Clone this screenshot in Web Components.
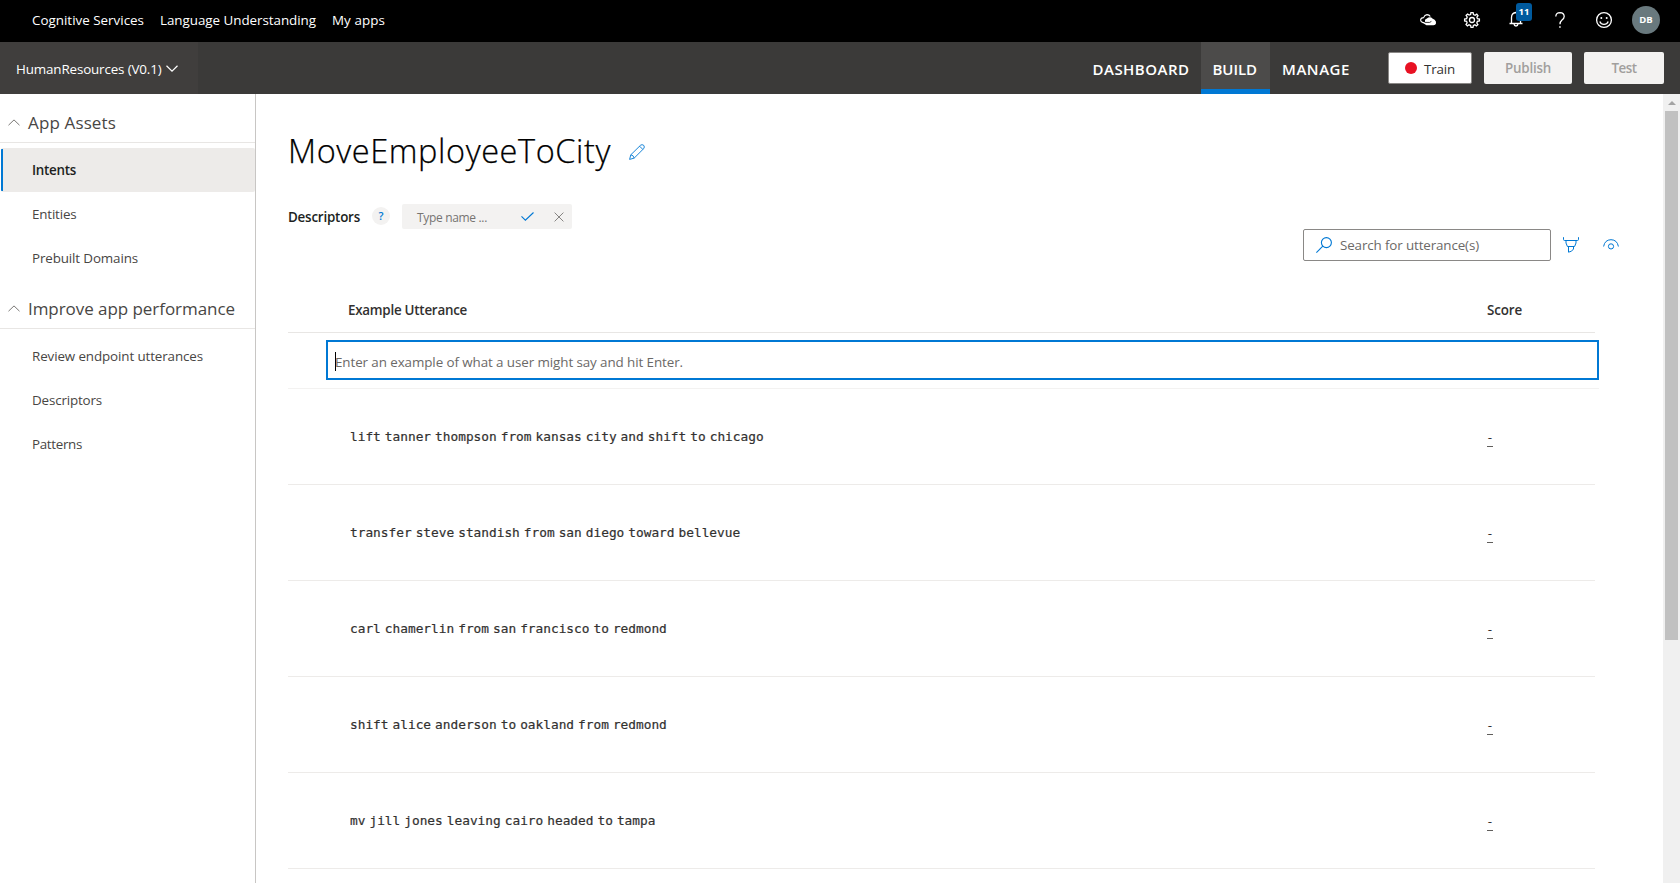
<!DOCTYPE html>
<html lang="en">
<head>
<meta charset="utf-8">
<title>Language Understanding</title>
<style>
html,body{margin:0;height:100%;overflow:hidden;background:#fff}
body{font-family:"Open Sans","Noto Sans",sans-serif;font-size:13.4px;color:#323130}
</style>
</head>
<body>
<luis-app></luis-app>
<script>
const component = (name, css, html, setup) => {
  const tpl = document.createElement('template');
  tpl.innerHTML = `<style>*{box-sizing:border-box}${css}</style>${html}`;
  customElements.define(name, class extends HTMLElement {
    constructor() {
      super();
      this.attachShadow({mode: 'open'}).append(tpl.content.cloneNode(true));
    }
    connectedCallback() { if (setup) setup(this, this.shadowRoot); }
  });
};

const icons = {
  cloud: [16, 12, '<path fill="currentColor" stroke="none" d="M5 5.8 8.4 3.6Q10.8 2.4 12.4 4.6L14.6 5.8Q16.5 7.4 16 9.4 15.5 11.2 13.5 11.2H6.4L3.4 9.2 5 8Z"/><path d="M5 8.6H3Q.6 8 .6 6 .8 3.8 3.6 3.6 4.6.8 7 .6 9.2.6 10.3 2.6"/><path d="M4.5 8.4H9.6L11.4 7.4" stroke="#000" stroke-width=".8"/>'],
  gear: [16, 16, '<path d="M6.9.6H9.1L9.5 2.6 11.1 3.3 12.8 2.2 14 3.7 12.9 5.2 13.4 6.6 15.4 7V9L13.4 9.4 12.8 11 13.9 12.6 12.4 14 10.9 12.8 9.4 13.4 9 15.4H7L6.6 13.4 5 12.8 3.4 13.9 2 12.4 3.1 10.9 2.6 9.4.6 9V7L2.6 6.6 3.2 5 2.1 3.4 3.6 2 5.1 3.1 6.6 2.6Z"/><circle cx="8" cy="8" r="2.5"/>'],
  bell: [14, 16, '<path d="M2.5 12.4V6.5Q2.5 2 7 1.5 11.5 2 11.5 6.5V12.4M.5 12.5H13.5M5 13Q5.2 15 7 15 8.8 15 9 13"/>'],
  help: [10, 16, '<path d="M.8 4.6Q.8.6 5 .6 9.2.8 9.2 4.5 9.2 6.2 7 8 5 9.6 5 12.2"/><path stroke="none" fill="currentColor" d="M4.2 14.3h1.5v1.5H4.2z"/>'],
  smile: [16, 16, '<circle cx="8" cy="8" r="7.4"/><path d="M3.8 9.4Q5 12.3 8 12.3 11 12.3 12.2 9.4"/><circle cx="5.3" cy="5.9" r="1" fill="currentColor" stroke="none"/><circle cx="10.7" cy="5.9" r="1" fill="currentColor" stroke="none"/>'],
  down: [12, 7, '<path d="M.5.7 6 6.1 11.5.7"/>'],
  up: [12, 7, '<path d="M.5 6.2 6 .9 11.5 6.2"/>'],
  pencil: [16, 16, '<path d="M.6 15.4 1.8 10.8 11.6 1.2Q13 .1 14.7 1.3 15.9 3 14.8 4.5L5.2 14.1Z M1.8 10.8Q4.6 11.2 5.2 14.1M10.6 2.2 13.8 5.4"/>'],
  check: [13, 9, '<path d="M.5 4.3 4.4 8.2 12.5.5"/>'],
  close: [10, 10, '<path d="M.6.6 9.4 9.4M9.4.6.6 9.4"/>'],
  search: [16, 16, '<circle cx="10.4" cy="5.6" r="5"/><path d="M6.8 9.2.4 15.6"/>'],
  marker: [16, 16, '<path d="M.5.2V2.4Q.5 3.5 1.6 3.5H14.4Q15.5 3.5 15.5 2.4V.2M3 3.5V6L4.4 9.5H11.6L13 6V3.5M5.5 9.5V15.2L8.5 14.2 10.5 12V9.5"/>'],
  eye: [16, 11, '<path d="M.6 7.5Q1.8.8 8 .7 14.2.8 15.4 7.5"/><circle cx="8" cy="7.4" r="2.6"/>']
};
component('ui-icon', ':host{display:block;flex:none}svg{display:block;overflow:visible;fill:none;stroke:currentColor}', '<svg></svg>', (host, root) => {
  const [w, h, body] = icons[host.getAttribute('name')];
  const svg = root.querySelector('svg');
  svg.setAttribute('width', w);
  svg.setAttribute('height', h);
  svg.setAttribute('viewBox', `0 0 ${w} ${h}`);
  svg.setAttribute('stroke-width', host.getAttribute('weight') || 1.1);
  svg.innerHTML = body;
});

component('top-bar', `
:host{display:flex;height:42px;background:#000;color:#fff;padding:0 20px 0 32px;align-items:center}
nav{display:flex;gap:16px;line-height:20px;flex:1;padding-bottom:2px}
.tools{display:flex;align-items:center;height:40px;margin-top:-2px}
.bell{position:relative;width:12px;margin:-2px 33px 0 30px}
.bell ui-icon{margin-left:-1px}
b{position:absolute;left:6px;top:-8px;width:16px;height:18px;border-radius:3px;background:#005a9e;font:700 9.5px/18px "Open Sans";text-align:center}
i{width:28px;height:28px;border-radius:50%;background:#69797e;margin-left:20px;font:700 9.5px/28px "Open Sans";text-align:center}`, `
<nav><fit-text w="112">Cognitive Services</fit-text><fit-text w="156">Language Understanding</fit-text><fit-text w="53">My apps</fit-text></nav>
<div class="tools"><ui-icon name="cloud"></ui-icon><ui-icon name="gear" style="margin-left:28px" weight="1.3"></ui-icon>
<div class="bell"><ui-icon name="bell" weight="1.3"></ui-icon><b>11</b></div>
<ui-icon name="help" weight="1.3"></ui-icon><ui-icon name="smile" style="margin-left:31px" weight="1.3"></ui-icon><i>DB</i></div>`);

component('app-button', `
:host{display:flex;height:32px;box-sizing:border-box;align-items:center;justify-content:center;background:#f3f2f1;color:#a19f9d;border-radius:2px;font-weight:600;line-height:20px;flex:none}
:host([primary]){background:#fff;color:#323130;border:1px solid #8a8886;font-weight:400;gap:7px;padding-top:2px}
span{display:none;width:12px;height:12px;border-radius:50%;background:#e81123}
:host([primary]) span{display:block;margin-top:-2px}`, `<span></span><slot></slot>`);

component('app-bar', `
:host{display:flex;height:52px;background:#3b3a39;color:#fff;padding-right:16px}
.app{width:198px;display:flex;background:#403e3d;padding:17px 0 0 16px;line-height:20px;gap:4.5px}
.app ui-icon{margin-top:6px}
nav{flex:1;display:flex;justify-content:flex-end;font-weight:600;font-size:15px;line-height:50px;margin-right:38px}
nav div{padding:2px 13px 0 12px}
.on{background:#4c4b4a;box-shadow:inset 0 -5px #0078d4}
.actions{display:flex;padding-top:10px}`, `
<div class="app"><fit-text w="145.5">HumanResources (V0.1)</fit-text><ui-icon name="down" weight="1.2"></ui-icon></div>
<nav><div style="padding-right:11px"><fit-text w="97">DASHBOARD</fit-text></div><div class="on"><fit-text w="44.5">BUILD</fit-text></div><div style="padding-right:0"><fit-text w="68">MANAGE</fit-text></div></nav>
<div class="actions"><app-button primary style="width:84px"><fit-text w="31">Train</fit-text></app-button><app-button style="width:88px;margin-left:12px"><fit-text w="46">Publish</fit-text></app-button><app-button style="width:80px;margin-left:12px"><fit-text w="25">Test</fit-text></app-button></div>`);

component('nav-group', `
:host{display:block}
header{display:flex;height:49px;border-bottom:1px solid #e8e6e4;margin-bottom:5px;padding:16px 0 0 8px;font-size:17px;line-height:26px;gap:8px;color:#484644}
ui-icon{margin-top:9px;color:#797775}`, `<header><ui-icon name="up" weight="1"></ui-icon><slot name="title"></slot></header><slot></slot>`);

component('nav-item', `
:host{display:block;height:44px;margin-left:1px;padding:0 0 0 31px;line-height:45px;box-sizing:border-box;color:#484644}
:host([active]){background:linear-gradient(#0078d4,#0078d4) 0 1px/2px 42px no-repeat #edebe9;color:#201f1e;font-weight:600;border-radius:2px}`, `<slot></slot>`);

component('side-bar', `
:host{display:block;width:256px;flex:none;border-right:1px solid #c8c6c4;box-sizing:border-box}`, `
<nav-group><fit-text slot="title" w="88">App Assets</fit-text>
<nav-item active><fit-text w="44">Intents</fit-text></nav-item><nav-item><fit-text w="44.5">Entities</fit-text></nav-item><nav-item><fit-text w="106">Prebuilt Domains</fit-text></nav-item></nav-group>
<nav-group><fit-text slot="title" w="207">Improve app performance</fit-text>
<nav-item><fit-text w="171">Review endpoint utterances</fit-text></nav-item><nav-item><fit-text w="70">Descriptors</fit-text></nav-item><nav-item><fit-text w="50">Patterns</fit-text></nav-item></nav-group>`);

component('intent-header', `
:host{display:block;height:168px}
h1{margin:0;display:flex;font-weight:300;font-size:32.5px;line-height:44px;color:#000;padding-top:35px;gap:18px}
h1 fit-text{-webkit-text-stroke:.25px #000}
h1 ui-icon{margin-top:15px;color:#0078d4}
.row{display:flex;margin-top:31px;height:25px}
.label{line-height:26px;color:#201f1e;font-weight:600}
.q{width:18px;height:18px;border-radius:50%;background:#f3f2f1;color:#0078d4;font:600 11px/18px "Open Sans";text-align:center;margin:3px 12px 0 12px}
.box{width:170px;background:#f3f2f1;border-radius:2px;display:flex;padding-left:15px;line-height:27px;font-size:12px;color:#767472}
.find{display:flex;justify-content:flex-end;padding-right:44px;color:#0078d4}
.search{width:248px;height:32px;border:1px solid #8a8886;border-radius:2px;display:flex;padding:7px 0 0 12px;gap:8px;line-height:17px}
.search fit-text{color:#6b6967}`, `
<h1><fit-text w="323">MoveEmployeeToCity</fit-text><ui-icon name="pencil" weight=".9"></ui-icon></h1>
<div class="row"><fit-text class="label" w="72">Descriptors</fit-text><div class="q">?</div>
<div class="box"><fit-text w="70">Type name ...</fit-text><ui-icon name="check" style="color:#0078d4;margin:8px 0 0 34px"></ui-icon><ui-icon name="close" weight=".9" style="color:#797775;margin:8px 0 0 20px"></ui-icon></div></div>
<div class="find"><div class="search"><ui-icon name="search"></ui-icon><fit-text w="139">Search for utterance(s)</fit-text></div><ui-icon name="marker" weight="1" style="margin:8px 0 0 12px"></ui-icon><ui-icon name="eye" weight="1" style="margin:10px 0 0 24px"></ui-icon></div>`);

component('utterance-row', `
:host{display:flex;height:96px;box-sizing:border-box;border-bottom:1px solid #edebe9;width:1307px;padding-left:62px}
.text{display:flex;gap:4px;width:1137px;font:12.8px/20px "DejaVu Sans Mono",monospace;-webkit-text-stroke:.2px #323130;padding-top:38px;color:#323130;white-space:pre}
.score{width:6px;height:18px;margin-top:40px;border-bottom:1px solid #605e5c;text-align:center;line-height:17px;color:#323130}`, `<div class="text"></div><div class="score">-</div>`, (host, root) => {
  root.querySelector('.text').replaceChildren(...host.textContent.trim().split(' ').map(word => {
    const span = document.createElement('span');
    span.textContent = word;
    return span;
  }));
});

component('utterance-table', `
:host{display:block}
.head{display:flex;width:1307px;height:71px;border-bottom:1px solid #e8e6e4;padding:17px 0 0 60px;line-height:62px;font-weight:600}
.head fit-text:last-child{margin-left:1020px}
.entry{width:1311px;height:56px;border-bottom:1px solid #f3f2f1;padding:7px 0 0 38px}
.input{height:40px;border:2px solid #0078d4;padding:10px 0 0 7px;display:flex;line-height:20px;color:#6b6967}
.caret{width:1px;height:19px;background:#000;margin-right:-1px}`, `
<div class="head"><fit-text w="119">Example Utterance</fit-text><fit-text w="35">Score</fit-text></div>
<div class="entry"><div class="input"><div class="caret"></div><fit-text w="348">Enter an example of what a user might say and hit Enter.</fit-text></div></div>
<utterance-row>lift tanner thompson from kansas city and shift to chicago</utterance-row>
<utterance-row>transfer steve standish from san diego toward bellevue</utterance-row>
<utterance-row>carl chamerlin from san francisco to redmond</utterance-row>
<utterance-row>shift alice anderson to oakland from redmond</utterance-row>
<utterance-row>mv jill jones leaving cairo headed to tampa</utterance-row>`);

component('scroll-track', `
:host{display:flex;flex-direction:column;align-items:center;width:17px;background:#f0f0f0;flex:none}
i{width:0;border:4px solid transparent;border-top:0;border-bottom-color:#a3a3a3;margin:7px 0 6px}
div{width:13px;height:529px;background:#c1c1c1}`, `<i></i><div></div>`);

component('luis-app', `
:host{display:flex;flex-direction:column;height:883px;overflow:hidden}
.body{display:flex;flex:1;min-height:0}
main{flex:1;padding-left:32px;overflow:hidden}`, `
<top-bar></top-bar><app-bar></app-bar>
<div class="body"><side-bar></side-bar><main><intent-header></intent-header><utterance-table></utterance-table></main><scroll-track></scroll-track></div>`);

// Defined last, so that every label is measured with its final inherited font.
component('fit-text', ':host{display:block;flex:none;white-space:nowrap}span{display:inline-block}', '<span><slot></slot></span>', (host, root) => {
  const width = parseFloat(host.getAttribute('w'));
  const span = root.querySelector('span');
  const natural = span.getBoundingClientRect().width;
  host.style.width = width + 'px';
  span.style.letterSpacing = (width - natural) / host.textContent.length + 'px';
});
</script>
</body>
</html>
